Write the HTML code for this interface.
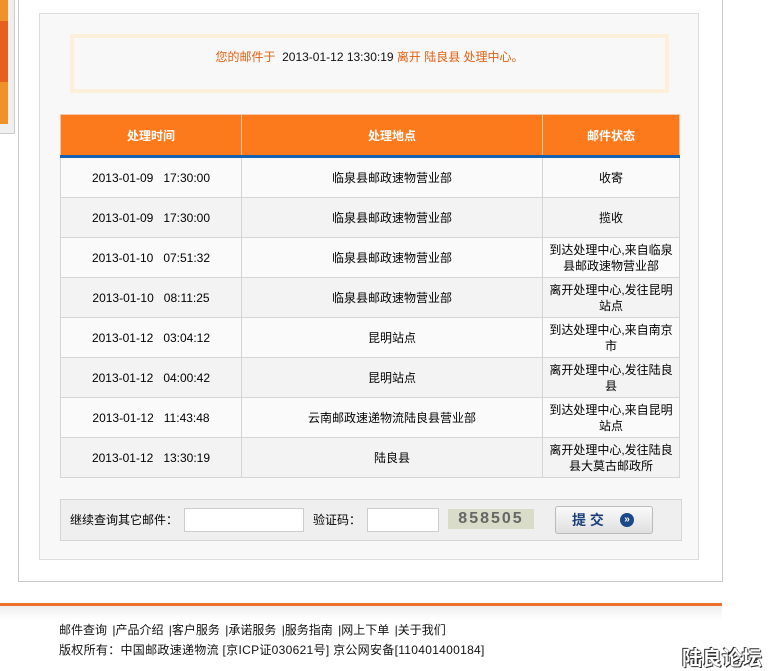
<!DOCTYPE html>
<html><head><meta charset="utf-8"><style>
body{margin:0;width:778px;height:670px;background:#fff;position:relative;overflow:hidden;font-family:"Liberation Sans","Noto Sans CJK SC",sans-serif;font-size:12px;color:#000}
.a{position:absolute}
table{border-collapse:collapse;position:absolute;left:60px;top:114px;width:620px;table-layout:fixed}
td{border:1px solid #d5d5d5;text-align:center;font-size:12px;line-height:16px;height:39px;padding:0 4px}
th{background:#fd7a1c;color:#fff;height:40px;font-size:12px;border:1px solid #f0c8a8;border-bottom:3px solid #1660b0;padding:0}
tr.g td{background:#f3f3f3}
tr.w td{background:#fafafa}
input{position:absolute;border:1px solid #ccc;height:22px;background:#fff;box-sizing:border-box}
</style></head><body>
<div class="a" style="left:0;top:0;width:14px;height:133px;background:#efefef;border-right:1px solid #ccc;border-bottom:1px solid #ccc"></div>
<div class="a" style="left:0;top:0;width:8px;height:124px;background:#f0922a"></div>
<div class="a" style="left:0;top:21px;width:8px;height:61px;background:#e86020"></div>
<div class="a" style="left:18px;top:-2px;width:703px;height:582px;border:1px solid #c8c8c8;background:#fff"></div>
<div class="a" style="left:39px;top:13px;width:658px;height:545px;border:1px solid #ddd;background:#f8f8f8"></div>
<div class="a" style="left:70px;top:34px;width:591px;height:51px;border:4px solid #fdf0da;background:#f8f8f8;text-align:center;line-height:38px;color:#e06010">您的邮件于 <span style="color:#111">&nbsp;2013-01-12 13:30:19</span> 离开 陆良县 处理中心。</div>
<table>
<colgroup><col style="width:181px"><col style="width:301px"><col></colgroup>
<tr><th>处理时间</th><th>处理地点</th><th>邮件状态</th></tr>
<tr class="w"><td>2013-01-09 &nbsp;&nbsp;17:30:00</td><td>临泉县邮政速物营业部</td><td>收寄</td></tr>
<tr class="g"><td>2013-01-09 &nbsp;&nbsp;17:30:00</td><td>临泉县邮政速物营业部</td><td>揽收</td></tr>
<tr class="w"><td>2013-01-10 &nbsp;&nbsp;07:51:32</td><td>临泉县邮政速物营业部</td><td>到达处理中心,来自临泉县邮政速物营业部</td></tr>
<tr class="g"><td>2013-01-10 &nbsp;&nbsp;08:11:25</td><td>临泉县邮政速物营业部</td><td>离开处理中心,发往昆明站点</td></tr>
<tr class="w"><td>2013-01-12 &nbsp;&nbsp;03:04:12</td><td>昆明站点</td><td>到达处理中心,来自南京市</td></tr>
<tr class="g"><td>2013-01-12 &nbsp;&nbsp;04:00:42</td><td>昆明站点</td><td>离开处理中心,发往陆良县</td></tr>
<tr class="w"><td>2013-01-12 &nbsp;&nbsp;11:43:48</td><td>云南邮政速递物流陆良县营业部</td><td>到达处理中心,来自昆明站点</td></tr>
<tr class="g"><td>2013-01-12 &nbsp;&nbsp;13:30:19</td><td>陆良县</td><td>离开处理中心,发往陆良县大莫古邮政所</td></tr>
</table>
<div class="a" style="left:60px;top:499px;width:620px;height:40px;border:1px solid #d5d5d5;background:#efefef"></div>
<div class="a" style="left:70px;top:511px">继续查询其它邮件：</div>
<input style="left:184px;top:508px;width:120px;height:24px">
<div class="a" style="left:313px;top:511px">验证码：</div>
<input style="left:367px;top:508px;width:72px;height:24px">
<div class="a" style="left:448px;top:509px;width:86px;height:20px;background:#d8dcc8;color:#666;font-size:16px;font-weight:bold;letter-spacing:2px;text-align:center;line-height:20px">858505</div>
<div class="a" style="left:555px;top:506px;width:96px;height:26px;border:1px solid #bbb;border-radius:3px;background:linear-gradient(#fafafa,#e0e0e0);color:#1a3f7a;font-weight:bold;font-size:14px;line-height:26px"><span style="position:absolute;left:16px">提 交</span><span style="position:absolute;left:64px;top:6px;width:14px;height:14px;border-radius:7px;background:#1a4a8a;color:#fff;font-size:10px;line-height:14px;text-align:center">»</span></div>
<div class="a" style="left:0;top:603px;width:722px;height:3px;background:#ee7030"></div>
<div class="a" style="left:0;top:606px;width:722px;height:14px;background:linear-gradient(#eee,#fff)"></div>
<div class="a" style="left:59px;top:621px;color:#111;word-spacing:2px">邮件查询 |产品介绍 |客户服务 |承诺服务 |服务指南 |网上下单 |关于我们</div>
<div class="a" style="left:59px;top:641px;color:#111;letter-spacing:0.3px">版权所有：中国邮政速递物流 [京ICP证030621号] 京公网安备[110401400184]</div>
<div class="a" style="left:682px;top:642px;font-size:20px;color:#fff;text-shadow:0 0 1px #000,1px 1px 0 #333,-1px -1px 0 #333;font-weight:bold">陆良论坛</div>
</body></html>
